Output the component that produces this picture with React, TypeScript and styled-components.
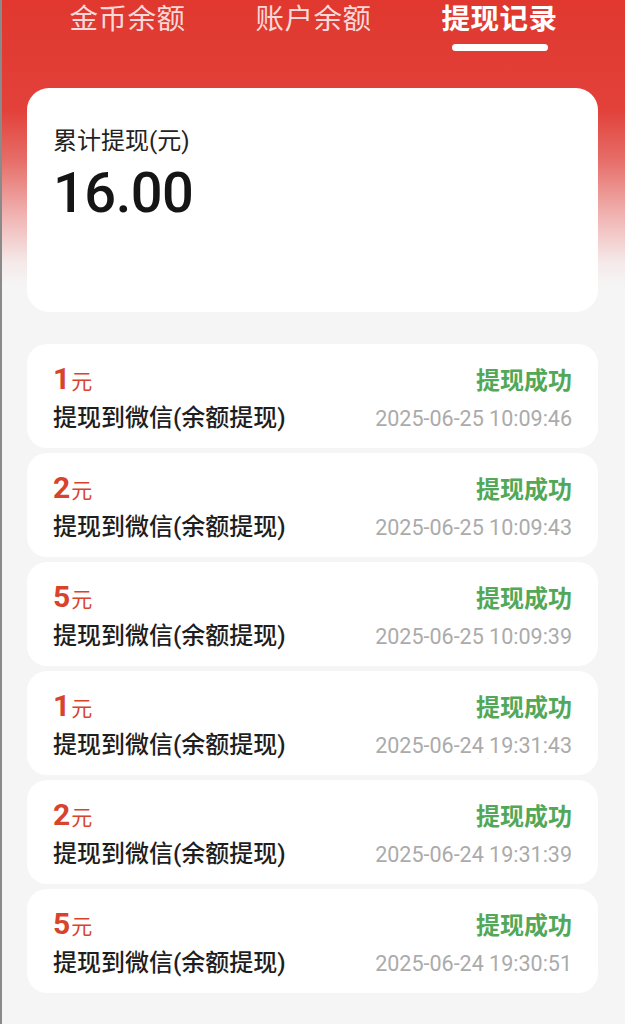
import React from "react";
import styled, { createGlobalStyle } from "styled-components";

const Global = createGlobalStyle`
  html, body { margin: 0; padding: 0; background: #f5f5f5; }
  body { font-family: Roboto, "Noto Sans CJK SC", "Noto Sans", sans-serif; }
  * { box-sizing: border-box; }
`;

const Page = styled.div`
  min-height: 1024px;
  background: linear-gradient(
    180deg,
    #e0382f 0px,
    #e2413a 110px,
    #e66d68 160px,
    #f0b3b1 215px,
    #f5e9e9 262px,
    #f5f5f5 285px,
    #f5f5f5 100%
  );
  border-left: 2px solid #8a8a8a;
  padding-bottom: 40px;
`;

const Tabs = styled.div`
  display: flex;
  justify-content: center;
  gap: 70px;
  height: 66px;
  padding-top: 3px;
`;

const Tab = styled.div<{ $active?: boolean }>`
  position: relative;
  font-size: 28.5px;
  line-height: 34px;
  height: 34px;
  font-weight: ${(p) => (p.$active ? 700 : 400)};
  color: ${(p) => (p.$active ? "#ffffff" : "rgba(255,255,255,0.82)")};
  letter-spacing: 0.5px;
`;

const Underline = styled.div`
  position: absolute;
  left: 50%;
  transform: translateX(-50%);
  top: 41px;
  width: 96px;
  height: 7px;
  border-radius: 4px;
  background: #ffffff;
`;

const Body = styled.div`
  padding: 22px 27px 0 25px;
`;

const Summary = styled.div`
  background: #ffffff;
  border-radius: 22px;
  height: 224px;
  padding: 37px 26px 0;
`;

const SummaryLabel = styled.div`
  font-size: 24px;
  line-height: 32px;
  color: #222;
`;

const SummaryValue = styled.div`
  margin-top: 4px;
  font-size: 56px;
  line-height: 64px;
  font-weight: 500;
  color: #151515;
  letter-spacing: -0.5px;
`;

const List = styled.div`
  margin-top: 32px;
  display: flex;
  flex-direction: column;
  gap: 5px;
`;

const Item = styled.div`
  background: #ffffff;
  border-radius: 20px;
  height: 104px;
  padding: 18px 26px 0;
  display: flex;
  flex-direction: column;
  gap: 4px;
`;

const Row = styled.div`
  display: flex;
  justify-content: space-between;
  align-items: baseline;
`;

const Amount = styled.div`
  color: #d8432c;
  font-size: 30px;
  line-height: 34px;
  font-weight: 700;
`;

const Unit = styled.span`
  font-size: 21px;
  font-weight: 400;
  margin-left: 1px;
`;

const Status = styled.div`
  color: #52a858;
  font-size: 24px;
  line-height: 34px;
  font-weight: 700;
`;

const Title = styled.div`
  color: #1e1e1e;
  font-size: 24px;
  line-height: 30px;
  font-weight: 500;
`;

const Time = styled.div`
  color: #ababab;
  font-size: 21.5px;
  line-height: 30px;
`;

const records = [
  { amount: 1, time: "2025-06-25 10:09:46" },
  { amount: 2, time: "2025-06-25 10:09:43" },
  { amount: 5, time: "2025-06-25 10:09:39" },
  { amount: 1, time: "2025-06-24 19:31:43" },
  { amount: 2, time: "2025-06-24 19:31:39" },
  { amount: 5, time: "2025-06-24 19:30:51" },
];

export default function App() {
  return (
    <Page>
      <Global />
      <Tabs>
        <Tab>金币余额</Tab>
        <Tab>账户余额</Tab>
        <Tab $active>
          提现记录
          <Underline />
        </Tab>
      </Tabs>
      <Body>
        <Summary>
          <SummaryLabel>累计提现(元)</SummaryLabel>
          <SummaryValue>16.00</SummaryValue>
        </Summary>
        <List>
          {records.map((r, i) => (
            <Item key={i}>
              <Row>
                <Amount>
                  {r.amount}
                  <Unit>元</Unit>
                </Amount>
                <Status>提现成功</Status>
              </Row>
              <Row>
                <Title>提现到微信(余额提现)</Title>
                <Time>{r.time}</Time>
              </Row>
            </Item>
          ))}
        </List>
      </Body>
    </Page>
  );
}
